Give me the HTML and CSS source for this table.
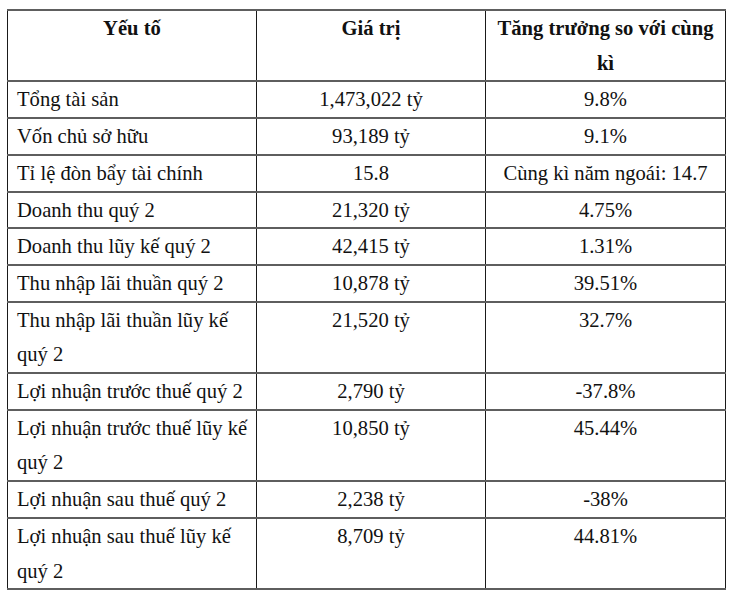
FILE: index.html
```html
<!DOCTYPE html>
<html lang="vi">
<head>
<meta charset="utf-8">
<link rel="stylesheet" href="styles.css">
</head>
<body>
<table class="data">
  <colgroup>
    <col class="c1"><col class="c2"><col class="c3">
  </colgroup>
  <thead>
    <tr><th>Yếu tố</th><th>Giá trị</th><th>Tăng trưởng so với cùng<br>kì</th></tr>
  </thead>
  <tbody>
    <tr><td>Tổng tài sản</td><td>1,473,022 tỷ</td><td>9.8%</td></tr>
    <tr><td>Vốn chủ sở hữu</td><td>93,189 tỷ</td><td>9.1%</td></tr>
    <tr><td>Tỉ lệ đòn bẩy tài chính</td><td>15.8</td><td>Cùng kì năm ngoái: 14.7</td></tr>
    <tr><td>Doanh thu quý 2</td><td>21,320 tỷ</td><td>4.75%</td></tr>
    <tr><td>Doanh thu lũy kế quý 2</td><td>42,415 tỷ</td><td>1.31%</td></tr>
    <tr><td>Thu nhập lãi thuần quý 2</td><td>10,878 tỷ</td><td>39.51%</td></tr>
    <tr><td>Thu nhập lãi thuần lũy kế<br>quý 2</td><td>21,520 tỷ</td><td>32.7%</td></tr>
    <tr><td>Lợi nhuận trước thuế quý 2</td><td>2,790 tỷ</td><td>-37.8%</td></tr>
    <tr><td>Lợi nhuận trước thuế lũy kế<br>quý 2</td><td>10,850 tỷ</td><td>45.44%</td></tr>
    <tr><td>Lợi nhuận sau thuế quý 2</td><td>2,238 tỷ</td><td>-38%</td></tr>
    <tr><td>Lợi nhuận sau thuế lũy kế<br>quý 2</td><td>8,709 tỷ</td><td>44.81%</td></tr>
  </tbody>
</table>
</body>
</html>
```
FILE: styles.css
```css
html, body {
  margin: 0;
  padding: 0;
  background: #ffffff;
}
body {
  padding: 9px 0 0 7px;
  font-family: "Liberation Serif", "Times New Roman", serif;
  color: #111;
}
.data {
  border-collapse: collapse;
  table-layout: fixed;
  width: 718px;
  font-size: 20.6px;
  line-height: 34.7px;
}
.c1 { width: 249px; }
.c2 { width: 229px; }
.c3 { width: 240px; }
.data th,
.data td {
  vertical-align: top;
  padding: 0 9px;
  border-left: 1px solid #1a1a1a;
  border-right: 1px solid #1a1a1a;
  border-top: 2px solid #5e5e5e;
  border-bottom: 2px solid #5e5e5e;
  white-space: nowrap;
  overflow: hidden;
}
.data th {
  font-weight: bold;
  text-align: center;
}
.data td { text-align: center; }
.data td:first-child { text-align: left; }
```
